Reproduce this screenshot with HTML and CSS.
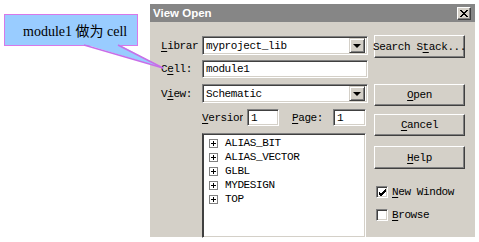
FILE: index.html
```html
<!DOCTYPE html>
<html lang="en">
<head>
  <meta charset="UTF-8">
  <title>View Open</title>
  <link rel="stylesheet" href="styles.css">
</head>
<body>
  <!-- annotation bubble -->
  <div class="callout">module1 做为 cell</div>
  <svg class="pointer" width="479" height="242" viewBox="0 0 479 242">
    <polygon points="84,44 163,68 118,44" fill="#99ccff"/>
    <line x1="84" y1="45" x2="163" y2="68" stroke="#c86ee8" stroke-width="1.5"/>
    <line x1="118" y1="45" x2="163" y2="68" stroke="#c86ee8" stroke-width="1.5"/>
  </svg>

  <div class="dialog">
    <div class="titlebar">
      <span>View Open</span>
      <div class="close">
        <svg width="8" height="7" viewBox="0 0 8 7"><path d="M0 0L7 7M1 0L8 7M7 0L0 7M8 0L1 7" stroke="#000" stroke-width="1"/></svg>
      </div>
    </div>

    <div class="content">
      <div class="form">
        <div class="row row-lib">
          <label class="label"><u>L</u>ibrar</label>
          <div class="combo">
            <span>myproject_lib</span>
            <div class="drop"><i></i></div>
          </div>
        </div>
        <div class="row row-cell">
          <label class="label">C<u>e</u>ll:</label>
          <div class="field">module1</div>
        </div>
        <div class="row row-view">
          <label class="label">V<u>i</u>ew:</label>
          <div class="combo">
            <span>Schematic</span>
            <div class="drop"><i></i></div>
          </div>
        </div>
        <div class="row row-version">
          <div class="spacer"></div>
          <label class="version-label"><u>V</u>ersion</label>
          <div class="field small">1</div>
          <label class="page-label"><u>P</u>age:</label>
          <div class="field small page">1</div>
        </div>
        <div class="row row-list">
          <div class="spacer"></div>
          <div class="list">
            <div class="item"><i class="plus"></i>ALIAS_BIT</div>
            <div class="item"><i class="plus"></i>ALIAS_VECTOR</div>
            <div class="item"><i class="plus"></i>GLBL</div>
            <div class="item"><i class="plus"></i>MYDESIGN</div>
            <div class="item"><i class="plus"></i>TOP</div>
          </div>
        </div>
      </div>

      <div class="side">
        <div class="btn search">Search S<u>t</u>ack...</div>
        <div class="btn open"><u>O</u>pen</div>
        <div class="btn cancel"><u>C</u>ancel</div>
        <div class="btn help"><u>H</u>elp</div>
        <div class="check first">
          <div class="box">
            <svg width="9" height="9" viewBox="0 0 9 9"><path d="M1 4L3 6L8 1M1 5L3 7L8 2M1 6L3 8L8 3" stroke="#000" fill="none"/></svg>
          </div>
          <span><u>N</u>ew Window</span>
        </div>
        <div class="check">
          <div class="box"></div>
          <span><u>B</u>rowse</span>
        </div>
      </div>
    </div>
  </div>
</body>
</html>
```

FILE: styles.css
```css
* {
  box-sizing: border-box;
  margin: 0;
  padding: 0;
}

body {
  position: relative;
  width: 479px;
  height: 242px;
  overflow: hidden;
  background: #fff;
  font-family: 'Liberation Mono', monospace;
  font-size: 11px;
  letter-spacing: -0.4px;
  color: #000;
}

u {
  text-underline-offset: 2px;
}

/* annotation */
.callout {
  position: absolute;
  left: 4px;
  top: 14px;
  width: 134px;
  height: 32px;
  display: flex;
  align-items: center;
  padding-left: 18px;
  background: #99ccff;
  border: 1px solid #d878e8;
  font-family: 'Liberation Serif', 'Noto Sans CJK SC', serif;
  font-size: 14px;
  letter-spacing: 0;
  z-index: 2;
}

.pointer {
  position: absolute;
  left: 0;
  top: 0;
  z-index: 3;
}

/* dialog */
.dialog {
  margin: 4px 0 0 149px;
  width: 326px;
  height: 233px;
  background: #d4d0c8;
  border-left: 1px solid #fff;
}

.titlebar {
  height: 18px;
  display: flex;
  align-items: center;
  justify-content: space-between;
  padding: 0 4px 0 3px;
  background: #868686;
  color: #fff;
  font-family: 'Liberation Sans', Arial, sans-serif;
  font-weight: bold;
  font-size: 11.5px;
  letter-spacing: 0;
}

.close {
  width: 14px;
  height: 13px;
  display: flex;
  justify-content: center;
  align-items: center;
  background: #d4d0c8;
  border: 1px solid;
  border-color: #fff #404040 #404040 #fff;
  box-shadow: inset -1px -1px #808080;
}

.content {
  display: flex;
  padding: 13px 0 0 11px;
}

.form {
  width: 207px;
}

.row {
  display: flex;
  align-items: center;
}

.row-lib { margin-top: 1px; }
.row-cell { margin-top: 5px; }
.row-view { margin-top: 6px; }
.row-version { margin-top: 6px; }
.row-list { margin-top: 7px; align-items: flex-start; }

.label,
.spacer {
  width: 41px;
  flex-shrink: 0;
}

.field,
.combo,
.list {
  background: #fff;
  border: 1px solid;
  border-color: #808080 #fff #fff #808080;
  box-shadow: inset 1px 1px #404040, inset -1px -1px #d4d0c8;
}

.field {
  width: 166px;
  height: 18px;
  padding-left: 3px;
  display: flex;
  align-items: center;
}

.combo {
  width: 166px;
  height: 19px;
  padding: 2px 2px 2px 3px;
  display: flex;
  align-items: center;
  justify-content: space-between;
}

.drop {
  width: 16px;
  height: 15px;
  display: flex;
  justify-content: center;
  align-items: center;
  background: #d4d0c8;
  border: 1px solid;
  border-color: #d4d0c8 #404040 #404040 #d4d0c8;
  box-shadow: inset 1px 1px #fff, inset -1px -1px #808080;
}

.drop i {
  border-left: 4px solid transparent;
  border-right: 4px solid transparent;
  border-top: 4px solid #000;
}

.version-label {
  width: 41px;
  overflow: hidden;
  white-space: nowrap;
}

.field.small {
  width: 32px;
  height: 17px;
  margin-left: 4px;
}

.page-label {
  margin-left: 13px;
  width: 33px;
}

.field.page {
  width: 33px;
  margin-left: 8px;
}

.list {
  width: 164px;
  height: 105px;
  padding: 2px 0 0 6px;
  border-left-color: #404040;
}

.item {
  height: 14px;
  display: flex;
  align-items: center;
  gap: 7px;
}

.plus {
  position: relative;
  width: 9px;
  height: 9px;
  border: 1px solid #808080;
  background: #fff;
}

.plus::before,
.plus::after {
  content: '';
  position: absolute;
  background: #000;
}

.plus::before {
  left: 1px;
  top: 3px;
  width: 5px;
  height: 1px;
}

.plus::after {
  left: 3px;
  top: 1px;
  width: 1px;
  height: 5px;
}

/* buttons column */
.side {
  margin-left: 6px;
  width: 91px;
}

.btn {
  height: 22px;
  display: flex;
  justify-content: center;
  align-items: center;
  background: #d4d0c8;
  border: 1px solid;
  border-color: #fff #404040 #404040 #fff;
  box-shadow: inset -1px -1px #808080;
  white-space: nowrap;
}

.btn.search { height: 23px; }
.btn.open { margin-top: 26px; }
.btn.cancel { margin-top: 8px; }
.btn.help { margin-top: 10px; height: 23px; }

.check {
  display: flex;
  align-items: center;
  gap: 4px;
  margin: 11px 0 0 2px;
  height: 12px;
}

.check.first {
  margin-top: 17px;
}

.box {
  width: 12px;
  height: 12px;
  display: flex;
  justify-content: center;
  align-items: center;
  background: #fff;
  border: 1px solid;
  border-color: #808080 #fff #fff #808080;
  box-shadow: inset 1px 1px #404040, inset -1px -1px #d4d0c8;
}
```
